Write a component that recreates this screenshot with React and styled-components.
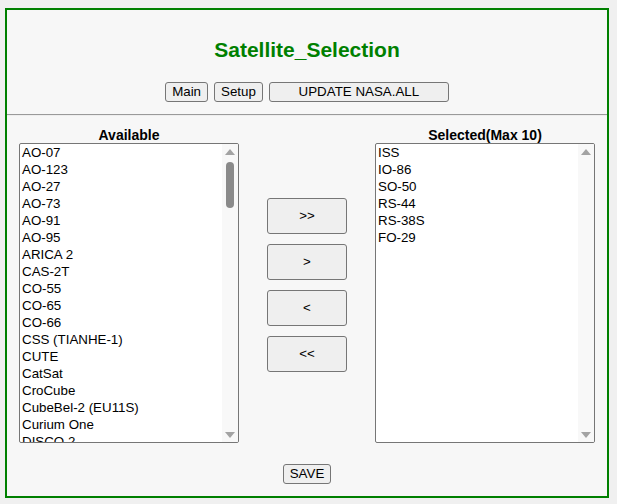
import React from "react";
import styled, { createGlobalStyle } from "styled-components";

const available = [
  "AO-07", "AO-123", "AO-27", "AO-73", "AO-91", "AO-95", "ARICA 2", "CAS-2T",
  "CO-55", "CO-65", "CO-66", "CSS (TIANHE-1)", "CUTE", "CatSat", "CroCube",
  "CubeBel-2 (EU11S)", "Curium One", "DISCO 2",
];
const selected = ["ISS", "IO-86", "SO-50", "RS-44", "RS-38S", "FO-29"];

const GlobalStyle = createGlobalStyle`
  html, body {
    margin: 0;
    padding: 0;
    background: #f0f0f0;
  }
  body {
    padding: 8px 8px 0 5px;
    font-family: "Liberation Sans", Arial, sans-serif;
  }
`;

const Frame = styled.div`
  width: 600px;
  height: 486px;
  border: 2px solid #008000;
  background: #f7f7f7;
  display: flex;
  flex-direction: column;
`;

const Header = styled.div`
  display: flex;
  flex-direction: column;
  align-items: center;
  padding-top: 28px;
`;

const Title = styled.h2`
  margin: 0;
  font-size: 21px;
  line-height: 24px;
  font-weight: bold;
  color: #008000;
`;

const NavRow = styled.div`
  display: flex;
  gap: 6px;
  margin-top: 20px;
`;

const Button = styled.button`
  font-family: "Liberation Sans", Arial, sans-serif;
  font-size: 13.33px;
  color: #000;
  background: #efefef;
  border: 1px solid #767676;
  border-radius: 3px;
  height: ${({ $h }) => $h || 20}px;
  width: ${({ $w }) => ($w ? `${$w}px` : "auto")};
  padding: 0 6px;
  line-height: 1;
  cursor: pointer;
`;

const Rule = styled.div`
  margin-top: 12px;
  border-top: 1px solid #9a9a9a;
  border-bottom: 1px solid #eeeeee;
`;

const Body = styled.div`
  display: flex;
  justify-content: center;
  gap: 28px;
  padding-top: 12px;
`;

const Column = styled.div`
  display: flex;
  flex-direction: column;
  align-items: center;
  width: 220px;
`;

const Label = styled.div`
  font-size: 14px;
  font-weight: bold;
  line-height: 15px;
`;

const ListBox = styled.div`
  width: 220px;
  height: 300px;
  box-sizing: border-box;
  border: 1px solid #767676;
  border-radius: 2px;
  background: #fff;
  display: flex;
  overflow: hidden;
`;

const Items = styled.div`
  flex: 1;
  overflow: hidden;
`;

const Item = styled.div`
  height: 17px;
  line-height: 17px;
  padding-left: 2px;
  font-size: 13.33px;
  color: #000;
  white-space: nowrap;
`;

const Track = styled.div`
  width: 16px;
  background: #f8f8f8;
  display: flex;
  flex-direction: column;
  align-items: center;
  padding: 5px 0 4px;
`;

const Arrow = styled.div`
  width: 0;
  height: 0;
  border-left: 5px solid transparent;
  border-right: 5px solid transparent;
  ${({ $down }) =>
    $down ? "border-top: 6px solid #a3a3a3;" : "border-bottom: 6px solid #a3a3a3;"}
`;

const Thumb = styled.div`
  width: 8px;
  height: 46px;
  margin-top: 7px;
  border-radius: 4px;
  background: #8a8a8a;
`;

const Gap = styled.div`
  flex: 1;
`;

const Movers = styled.div`
  display: flex;
  flex-direction: column;
  gap: 10px;
  padding-top: 70px;
`;

const Footer = styled.div`
  display: flex;
  justify-content: center;
  padding-top: 21px;
`;

const SatList = ({ title, items, thumb }) => (
  <Column>
    <Label>{title}</Label>
    <ListBox>
      <Items>
        {items.map((s) => (
          <Item key={s}>{s}</Item>
        ))}
      </Items>
      <Track>
        <Arrow />
        {thumb && <Thumb />}
        <Gap />
        <Arrow $down />
      </Track>
    </ListBox>
  </Column>
);

export default function App() {
  return (
    <>
      <GlobalStyle />
      <Frame>
        <Header>
          <Title>Satellite_Selection</Title>
          <NavRow>
            <Button>Main</Button>
            <Button>Setup</Button>
            <Button $w={180}>UPDATE NASA.ALL</Button>
          </NavRow>
        </Header>
        <Rule />
        <Body>
          <SatList title="Available" items={available} thumb />
          <Movers>
            <Button $w={80} $h={36}>&gt;&gt;</Button>
            <Button $w={80} $h={36}>&gt;</Button>
            <Button $w={80} $h={36}>&lt;</Button>
            <Button $w={80} $h={36}>&lt;&lt;</Button>
          </Movers>
          <SatList title="Selected(Max 10)" items={selected} />
        </Body>
        <Footer>
          <Button>SAVE</Button>
        </Footer>
      </Frame>
    </>
  );
}
